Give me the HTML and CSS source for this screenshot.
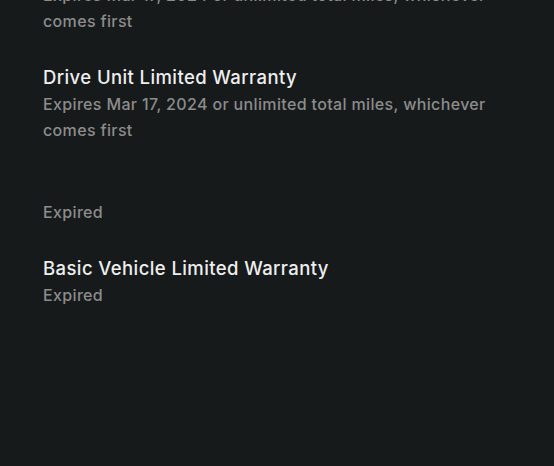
FILE: index.html
```html
<!DOCTYPE html>
<html lang="en">
<head>
  <meta charset="UTF-8" />
  <meta name="viewport" content="width=device-width, initial-scale=1.0"/>
  <title>Warranty</title>
  <link rel="stylesheet" href="styles.css">
</head>
<body>

<div class="page">
  <div class="group">
    <div class="item">
      <div class="sub">Expires Mar 17, 2024 or unlimited total miles, whichever comes first</div>
    </div>
    <div class="item">
      <div class="title">Drive Unit Limited Warranty</div>
      <div class="sub">Expires Mar 17, 2024 or unlimited total miles, whichever comes first</div>
    </div>
  </div>

  <div class="group">
    <div class="group-head">Expired</div>
    <div class="item">
      <div class="title">Basic Vehicle Limited Warranty</div>
      <div class="sub">Expired</div>
    </div>
  </div>
</div>

</body>
</html>
```

FILE: styles.css
```css
body {
  margin: 0;
  font-family: Inter, 'Noto Sans', sans-serif;
  background: #171a1b;
  height: 100vh;
  overflow: hidden;
}

.page {
  padding: 0 43px;
  margin-top: -18px;
}

.group {
  margin-bottom: 56px;
}

.item {
  margin-bottom: 31px;
}

.title {
  color: #eeeeee;
  font-size: 18.5px;
  font-weight: 500;
  letter-spacing: 0.4px;
  line-height: 25px;
  margin-bottom: 1px;
}

.sub, .group-head {
  color: #8c8c8c;
  font-size: 16px;
  font-weight: 500;
  letter-spacing: 0.35px;
  line-height: 26px;
}

.group-head {
  margin-bottom: 31px;
}
```
